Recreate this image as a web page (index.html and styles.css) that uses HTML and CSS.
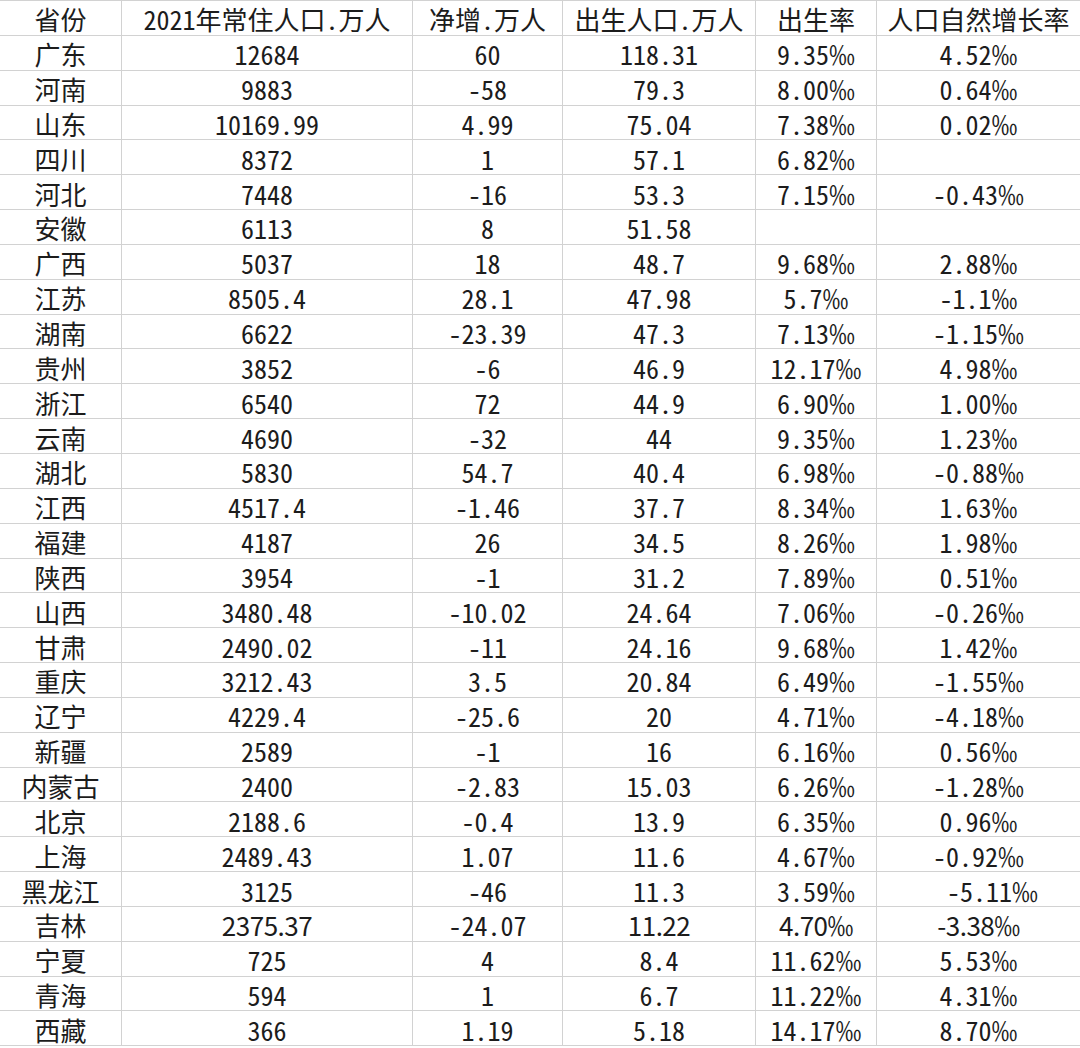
FILE: index.html
```html
<!DOCTYPE html>
<html lang="zh-CN">
<head>
<meta charset="utf-8">
<title>2021年各省人口数据</title>
<link rel="stylesheet" href="styles.css">
</head>
<body>
<table class="sheet">
<colgroup>
<col class="c1"><col class="c2"><col class="c3"><col class="c4"><col class="c5"><col class="c6">
</colgroup>
<thead>
<tr><th>省份</th><th>2021年常住人口.万人</th><th>净增.万人</th><th>出生人口.万人</th><th>出生率</th><th>人口自然增长率</th></tr>
</thead>
<tbody>
<tr><td>广东</td><td>12684</td><td>60</td><td>118.31</td><td>9.35‰</td><td>4.52‰</td></tr>
<tr><td>河南</td><td>9883</td><td>-58</td><td>79.3</td><td>8.00‰</td><td>0.64‰</td></tr>
<tr><td>山东</td><td>10169.99</td><td>4.99</td><td>75.04</td><td>7.38‰</td><td>0.02‰</td></tr>
<tr><td>四川</td><td>8372</td><td>1</td><td>57.1</td><td>6.82‰</td><td></td></tr>
<tr><td>河北</td><td>7448</td><td>-16</td><td>53.3</td><td>7.15‰</td><td>-0.43‰</td></tr>
<tr><td>安徽</td><td>6113</td><td>8</td><td>51.58</td><td></td><td></td></tr>
<tr><td>广西</td><td>5037</td><td>18</td><td>48.7</td><td>9.68‰</td><td>2.88‰</td></tr>
<tr><td>江苏</td><td>8505.4</td><td>28.1</td><td>47.98</td><td>5.7‰</td><td>-1.1‰</td></tr>
<tr><td>湖南</td><td>6622</td><td>-23.39</td><td>47.3</td><td>7.13‰</td><td>-1.15‰</td></tr>
<tr><td>贵州</td><td>3852</td><td>-6</td><td>46.9</td><td>12.17‰</td><td>4.98‰</td></tr>
<tr><td>浙江</td><td>6540</td><td>72</td><td>44.9</td><td>6.90‰</td><td>1.00‰</td></tr>
<tr><td>云南</td><td>4690</td><td>-32</td><td>44</td><td>9.35‰</td><td>1.23‰</td></tr>
<tr><td>湖北</td><td>5830</td><td>54.7</td><td>40.4</td><td>6.98‰</td><td>-0.88‰</td></tr>
<tr><td>江西</td><td>4517.4</td><td>-1.46</td><td>37.7</td><td>8.34‰</td><td>1.63‰</td></tr>
<tr><td>福建</td><td>4187</td><td>26</td><td>34.5</td><td>8.26‰</td><td>1.98‰</td></tr>
<tr><td>陕西</td><td>3954</td><td>-1</td><td>31.2</td><td>7.89‰</td><td>0.51‰</td></tr>
<tr><td>山西</td><td>3480.48</td><td>-10.02</td><td>24.64</td><td>7.06‰</td><td>-0.26‰</td></tr>
<tr><td>甘肃</td><td>2490.02</td><td>-11</td><td>24.16</td><td>9.68‰</td><td>1.42‰</td></tr>
<tr><td>重庆</td><td>3212.43</td><td>3.5</td><td>20.84</td><td>6.49‰</td><td>-1.55‰</td></tr>
<tr><td>辽宁</td><td>4229.4</td><td>-25.6</td><td>20</td><td>4.71‰</td><td>-4.18‰</td></tr>
<tr><td>新疆</td><td>2589</td><td>-1</td><td>16</td><td>6.16‰</td><td>0.56‰</td></tr>
<tr><td>内蒙古</td><td>2400</td><td>-2.83</td><td>15.03</td><td>6.26‰</td><td>-1.28‰</td></tr>
<tr><td>北京</td><td>2188.6</td><td>-0.4</td><td>13.9</td><td>6.35‰</td><td>0.96‰</td></tr>
<tr><td>上海</td><td>2489.43</td><td>1.07</td><td>11.6</td><td>4.67‰</td><td>-0.92‰</td></tr>
<tr><td>黑龙江</td><td>3125</td><td>-46</td><td>11.3</td><td>3.59‰</td><td class="shift">-5.11‰</td></tr>
<tr><td>吉林</td><td class="alt">2375.37</td><td>-24.07</td><td class="alt">11.22</td><td class="alt">4.70‰</td><td class="alt">-3.38‰</td></tr>
<tr><td>宁夏</td><td>725</td><td>4</td><td>8.4</td><td>11.62‰</td><td>5.53‰</td></tr>
<tr><td>青海</td><td>594</td><td>1</td><td>6.7</td><td>11.22‰</td><td>4.31‰</td></tr>
<tr><td>西藏</td><td>366</td><td>1.19</td><td>5.18</td><td>14.17‰</td><td>8.70‰</td></tr>
</tbody>
</table>
</body>
</html>
```

FILE: styles.css
```css
html, body {
  margin: 0;
  padding: 0;
  background: #ffffff;
}

.sheet {
  border-collapse: collapse;
  table-layout: fixed;
  width: 1081px;
  margin-left: -1px;
  color: #1c1c1c;
  font-family: "Noto Sans Mono CJK SC", "DejaVu Sans Mono", "Noto Sans CJK SC", monospace;
  font-size: 26px;
  font-weight: 400;
}

.c1 { width: 122px; }
.c2 { width: 291px; }
.c3 { width: 150px; }
.c4 { width: 193px; }
.c5 { width: 121px; }
.c6 { width: 204px; }

.sheet th,
.sheet td {
  height: 34.85px;
  padding: 3px 0 0 0;
  box-sizing: border-box;
  border: 1px solid #d2d2d2;
  text-align: center;
  vertical-align: middle;
  line-height: 30px;
  white-space: nowrap;
  font-weight: 400;
}

.sheet td.shift {
  padding-left: 28px;
}

.sheet td.alt {
  font-family: "Noto Sans CJK SC", "Liberation Sans", sans-serif;
  font-weight: 400;
  letter-spacing: -0.5px;
}
```
